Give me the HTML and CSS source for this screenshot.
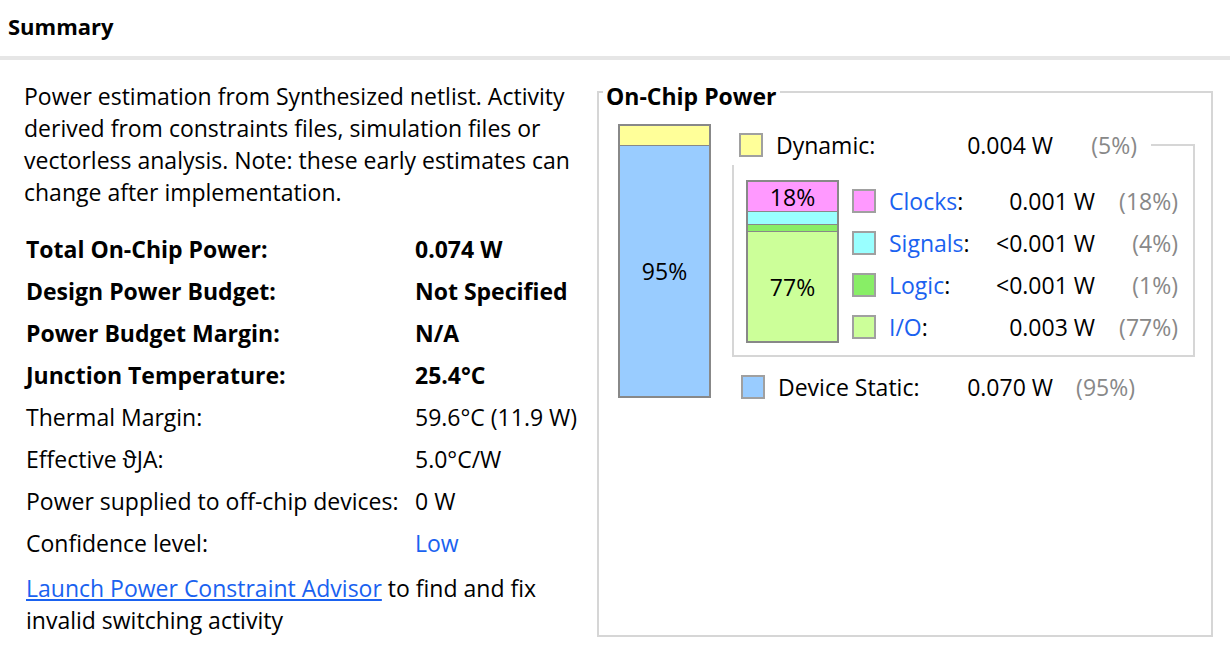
FILE: index.html
```html
<!DOCTYPE html>
<html>
<head>
<meta charset="utf-8">
<link rel="stylesheet" href="styles.css">
</head>
<body>
<div class="header"><span class="title">Summary</span></div>
<div class="main">
  <div class="left">
    <p class="intro">Power estimation from Synthesized netlist. Activity<br>derived from constraints files, simulation files or<br>vectorless analysis. Note: these early estimates can<br>change after implementation.</p>
    <div class="facts">
      <div class="k b">Total On-Chip Power:</div><div class="v b">0.074 W</div>
      <div class="k b">Design Power Budget:</div><div class="v b">Not Specified</div>
      <div class="k b">Power Budget Margin:</div><div class="v b">N/A</div>
      <div class="k b">Junction Temperature:</div><div class="v b">25.4°C</div>
      <div class="k">Thermal Margin:</div><div class="v">59.6°C (11.9 W)</div>
      <div class="k">Effective ϑJA:</div><div class="v">5.0°C/W</div>
      <div class="k">Power supplied to off-chip devices:</div><div class="v">0 W</div>
      <div class="k">Confidence level:</div><div class="v link-plain">Low</div>
    </div>
    <p class="advisor"><a class="link" href="#">Launch Power Constraint Advisor</a> to find and fix<br>invalid switching activity</p>
  </div>
  <div class="chipbox">
    <div class="chiptitle">On-Chip Power</div>
    <div class="chipbody">
      <div class="bigbar">
        <div class="seg seg-dyn"></div>
        <div class="seg seg-static">95%</div>
      </div>
      <div class="legend">
        <div class="dynrow">
          <span class="sq sq-dyn"></span>
          <span class="lab dynlab">Dynamic:</span>
          <span class="val dynval">0.004 W</span>
          <span class="pct dynpct">(5%)</span>
          <span class="connector"></span>
        </div>
        <div class="group">
          <div class="smallbar">
            <div class="seg s-clk">18%</div>
            <div class="seg s-sig"></div>
            <div class="seg s-log"></div>
            <div class="seg s-io">77%</div>
          </div>
          <div class="rows">
            <div class="row"><span class="sq sq-clk"></span><span class="lab inlab"><span class="blue">Clocks</span>:</span><span class="val inval">0.001 W</span><span class="pct inpct">(18%)</span></div>
            <div class="row"><span class="sq sq-sig"></span><span class="lab inlab"><span class="blue">Signals</span>:</span><span class="val inval">&lt;0.001 W</span><span class="pct inpct">(4%)</span></div>
            <div class="row"><span class="sq sq-log"></span><span class="lab inlab"><span class="blue">Logic</span>:</span><span class="val inval">&lt;0.001 W</span><span class="pct inpct">(1%)</span></div>
            <div class="row"><span class="sq sq-io"></span><span class="lab inlab"><span class="blue">I/O</span>:</span><span class="val inval">0.003 W</span><span class="pct inpct">(77%)</span></div>
          </div>
        </div>
        <div class="staticrow">
          <span class="sq sq-static"></span>
          <span class="lab stlab">Device Static:</span>
          <span class="val stval">0.070 W</span>
          <span class="pct stpct">(95%)</span>
        </div>
      </div>
    </div>
  </div>
</div>
</body>
</html>
```
FILE: styles.css
```css
html, body {
  margin: 0;
  padding: 0;
  background: #fff;
}
body {
  font-family: "Segoe UI", "Open Sans", "Noto Sans", sans-serif;
  font-size: 23px;
  color: #000;
  width: 1230px;
  height: 654px;
  overflow: hidden;
}
.header {
  border-bottom: 4px solid #e6e6e6;
  display: flex;
  align-items: center;
  padding-left: 8px;
  box-sizing: border-box;
  height: 60px;
  padding-bottom: 4px;
}
.title {
  font-weight: bold;
  font-size: 22px;
}
.main {
  display: flex;
  align-items: flex-start;
}
.left {
  width: 597px;
  box-sizing: border-box;
  padding-top: 20px;
  padding-left: 24px;
}
.intro {
  margin: 0;
  line-height: 32px;
}
.facts {
  margin-top: 20px;
  margin-left: 2px;
  display: grid;
  grid-template-columns: 389px auto;
  grid-auto-rows: 42px;
  align-items: center;
}
.b { font-weight: bold; }
.link-plain { color: #1a62f0; }
.advisor {
  margin: 8px 0 0 2px;
  line-height: 32px;
}
.link {
  color: #1a62f0;
  text-decoration: underline;
}
.chipbox {
  margin-top: 31px;
  width: 616px;
  height: 546px;
  box-sizing: border-box;
  border: 2px solid #d6d6d6;
}
.chiptitle {
  margin-top: -10px;
  margin-left: 4px;
  padding: 0 3px;
  width: fit-content;
  background: #fff;
  font-weight: bold;
  line-height: 26px;
}
.chipbody {
  display: flex;
  align-items: flex-start;
  padding-left: 19px;
  padding-top: 15px;
}
.bigbar {
  width: 93px;
  height: 274px;
  box-sizing: border-box;
  border: 2px solid #888;
  display: flex;
  flex-direction: column;
}
.seg {
  display: flex;
  align-items: center;
  justify-content: center;
}
.seg-dyn {
  height: 19px;
  background: #ffff99;
  border-bottom: 1px solid #888;
}
.seg-static {
  flex: 1;
  background: #99ccff;
}
.legend {
  margin-left: 21px;
  width: 463px;
}
.dynrow {
  display: flex;
  align-items: flex-start;
  height: 41px;
  padding-left: 7px;
}
.sq {
  flex: none;
  width: 24px;
  height: 24px;
  box-sizing: border-box;
  border: 2px solid #a0a0a0;
}
.dynrow .sq { margin-top: 9px; }
.lab, .val, .pct {
  line-height: 24px;
  white-space: nowrap;
}
.dynrow .lab, .dynrow .val, .dynrow .pct { margin-top: 9px; }
.val { text-align: right; }
.pct { text-align: right; color: #888; }
.blue { color: #1a62f0; }
.sq-dyn { background: #ffff99; }
.sq-static { background: #99ccff; }
.sq-clk { background: #ff99ff; }
.sq-sig { background: #99ffff; }
.sq-log { background: #88ee66; }
.sq-io { background: #ccff99; }
.dynlab { margin-left: 13px; width: 150px; }
.dynval { width: 127px; }
.dynpct { width: 84px; }
.connector {
  flex: 1;
  margin-left: 14px;
  margin-top: 20px;
  align-self: stretch;
  border-top: 2px solid #d6d6d6;
  border-right: 2px solid #d6d6d6;
}
.group {
  display: flex;
  align-items: flex-start;
  border: 2px solid #d6d6d6;
  border-top: none;
  height: 192px;
  box-sizing: border-box;
  padding-top: 15px;
  padding-left: 12px;
}
.smallbar {
  width: 93px;
  height: 163px;
  box-sizing: border-box;
  border: 2px solid #888;
  display: flex;
  flex-direction: column;
}
.s-clk {
  height: 29px;
  background: #ff99ff;
  border-bottom: 1px solid #888;
}
.s-sig {
  height: 12px;
  background: #99ffff;
  border-bottom: 1px solid #888;
}
.s-log {
  height: 6px;
  background: #88ee66;
  border-bottom: 1px solid #888;
}
.s-io {
  flex: 1;
  background: #ccff99;
}
.rows {
  margin-left: 13px;
  margin-top: 0;
  display: flex;
  flex-direction: column;
}
.row {
  display: flex;
  align-items: center;
  height: 42px;
}
.inlab { margin-left: 13px; width: 100px; }
.inval { width: 106px; }
.inpct { width: 83px; }
.staticrow {
  display: flex;
  align-items: center;
  height: 42px;
  margin-top: 9px;
  padding-left: 9px;
}
.stlab { margin-left: 13px; width: 152px; }
.stval { width: 123px; }
.stpct { width: 82px; }
```
